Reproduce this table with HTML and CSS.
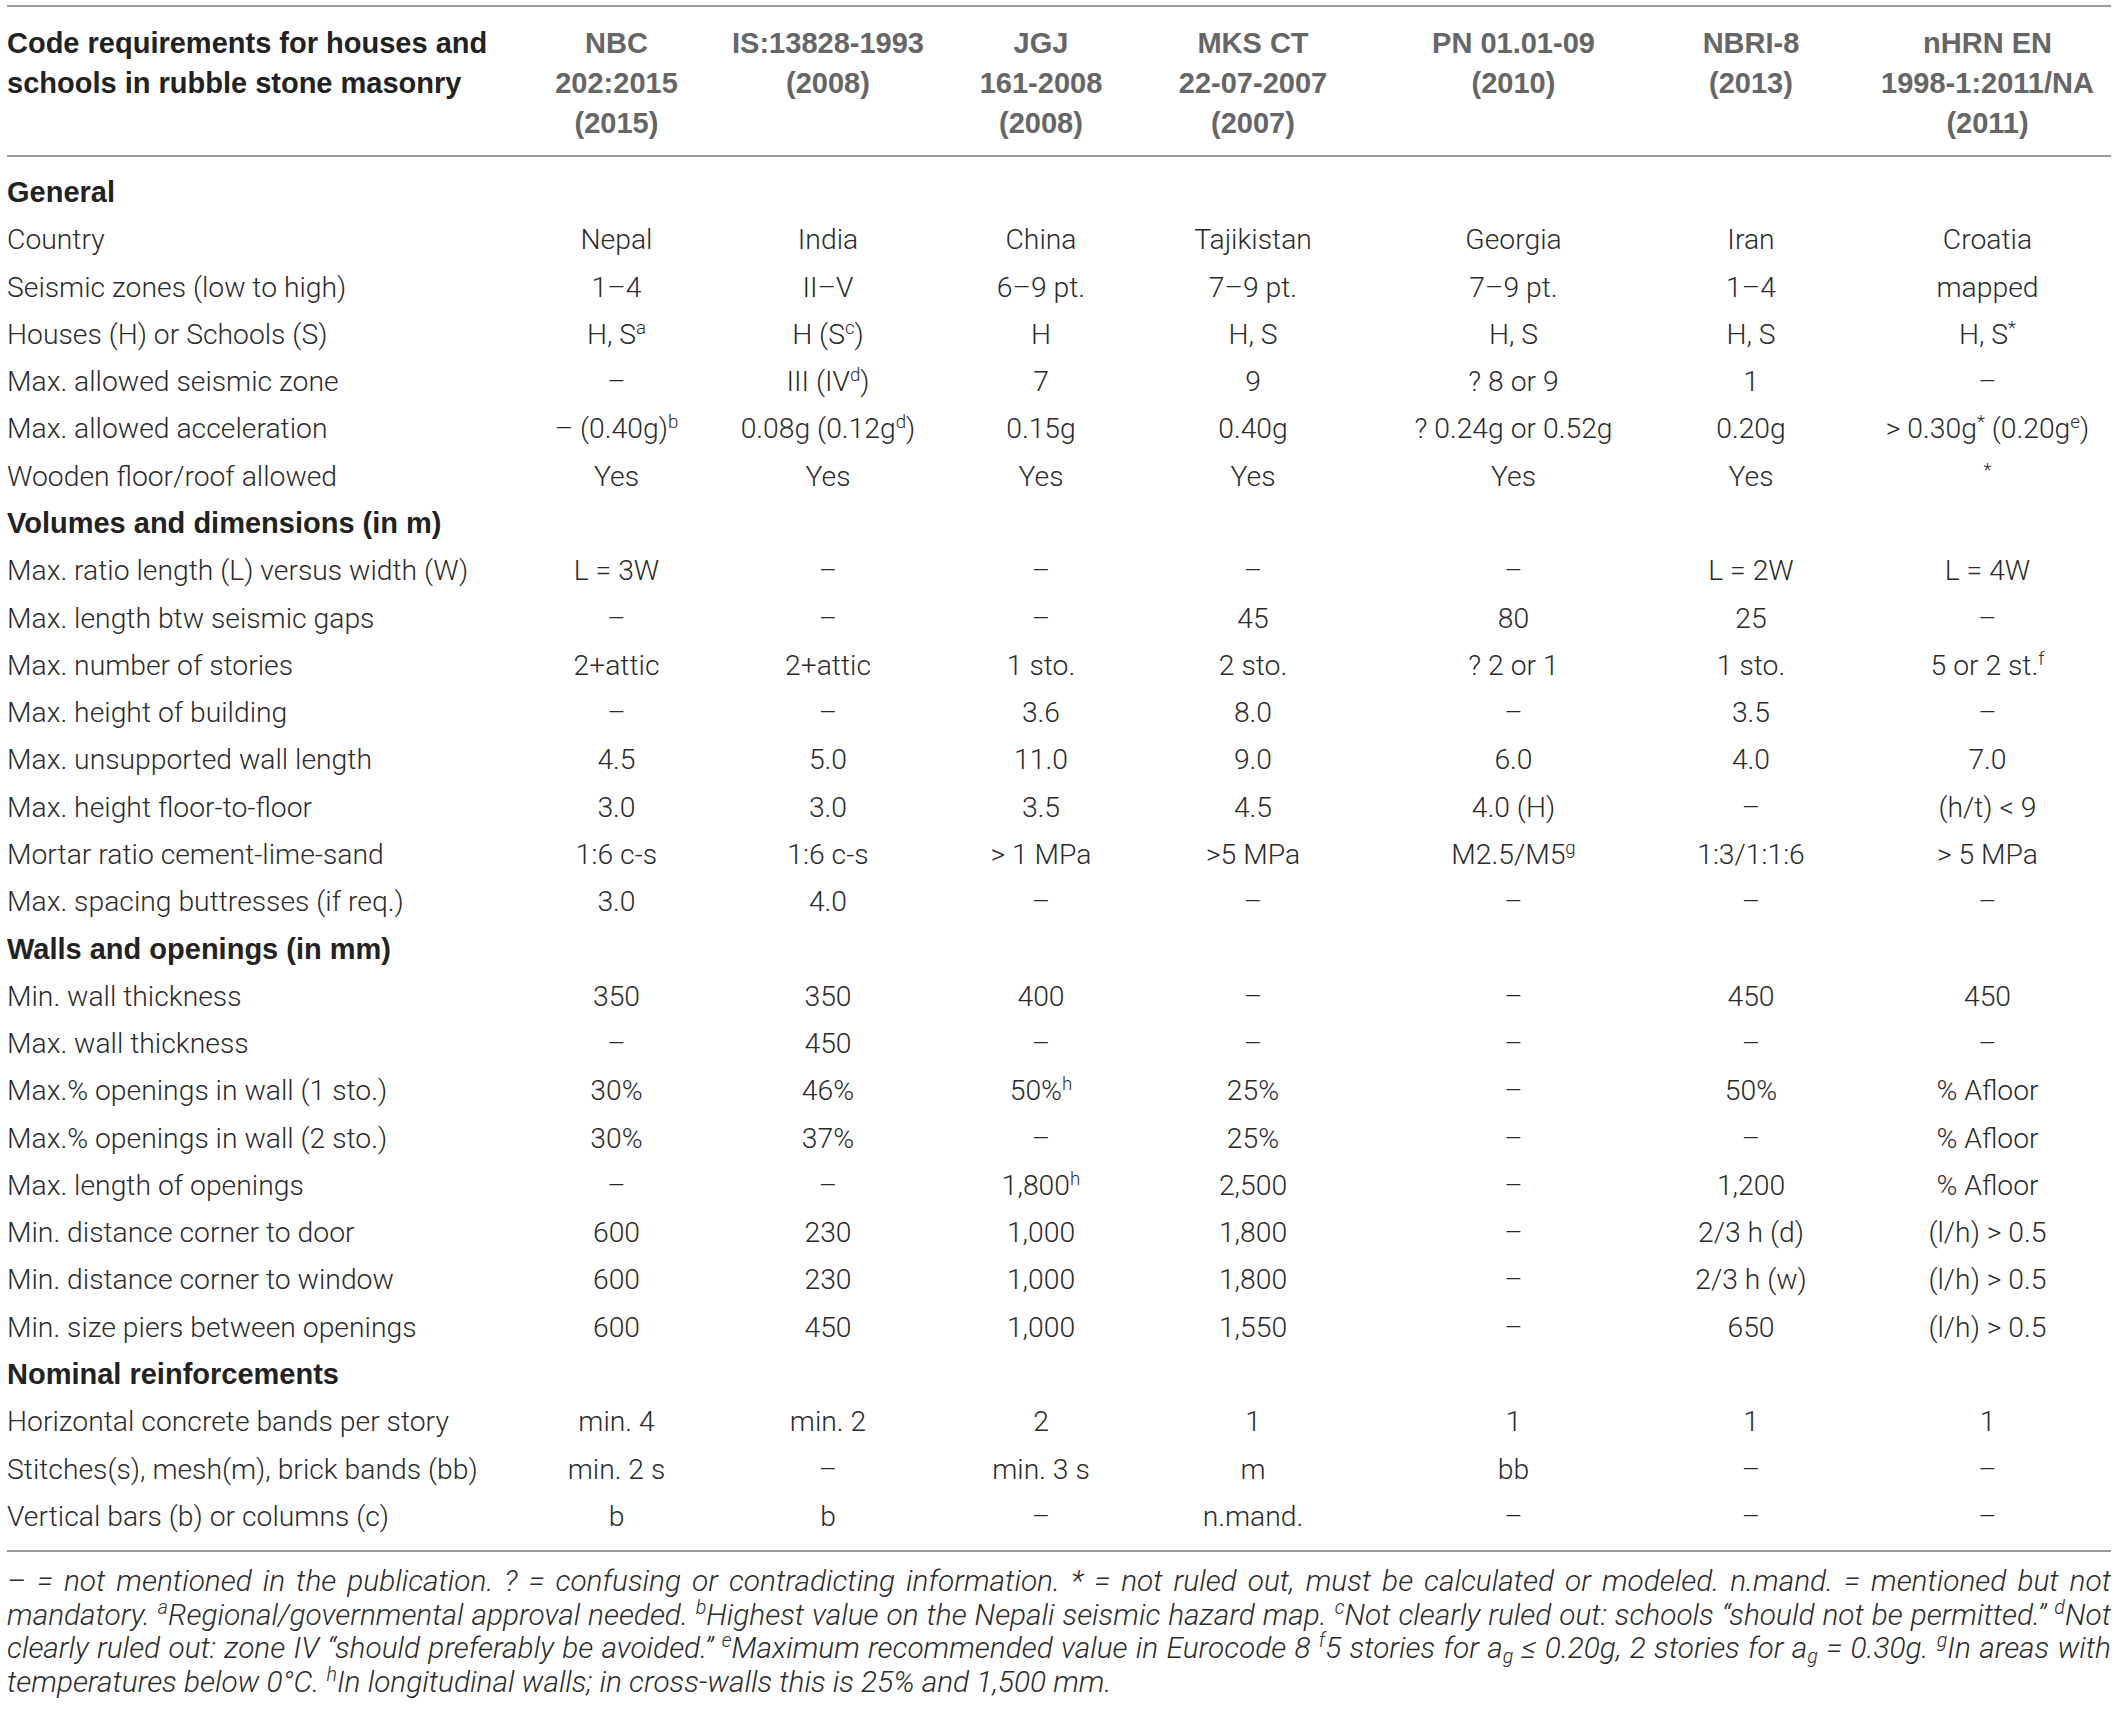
FILE: index.html
```html
<!DOCTYPE html>
<html lang="en">
<head>
<meta charset="utf-8">
<title>Code requirements for houses and schools in rubble stone masonry</title>
<link rel="stylesheet" href="styles.css">
</head>
<body>
<div class="wrap">
<table class="codes">
  <colgroup>
    <col class="c0"><col class="c1"><col class="c2"><col class="c3"><col class="c4"><col class="c5"><col class="c6"><col class="c7">
  </colgroup>
  <thead>
    <tr>
      <th class="lead">Code requirements for houses and schools in rubble stone masonry</th>
      <th>NBC<br>202:2015<br>(2015)</th>
      <th>IS:13828-1993<br>(2008)</th>
      <th>JGJ<br>161-2008<br>(2008)</th>
      <th>MKS CT<br>22-07-2007<br>(2007)</th>
      <th>PN 01.01-09<br>(2010)</th>
      <th>NBRI-8<br>(2013)</th>
      <th class="last">nHRN EN<br>1998-1:2011/NA<br>(2011)</th>
    </tr>
  </thead>
  <tbody>
    <tr class="sec first"><td colspan="8">General</td></tr>
    <tr><td>Country</td><td>Nepal</td><td>India</td><td>China</td><td>Tajikistan</td><td>Georgia</td><td>Iran</td><td class="last">Croatia</td></tr>
    <tr><td>Seismic zones (low to high)</td><td>1–4</td><td>II–V</td><td>6–9 pt.</td><td>7–9 pt.</td><td>7–9 pt.</td><td>1–4</td><td class="last">mapped</td></tr>
    <tr><td>Houses (H) or Schools (S)</td><td>H, S<sup>a</sup></td><td>H (S<sup>c</sup>)</td><td>H</td><td>H, S</td><td>H, S</td><td>H, S</td><td class="last">H, S<sup>*</sup></td></tr>
    <tr><td>Max. allowed seismic zone</td><td>–</td><td>III (IV<sup>d</sup>)</td><td>7</td><td>9</td><td>? 8 or 9</td><td>1</td><td class="last">–</td></tr>
    <tr><td>Max. allowed acceleration</td><td>– (0.40g)<sup>b</sup></td><td>0.08g (0.12g<sup>d</sup>)</td><td>0.15g</td><td>0.40g</td><td>? 0.24g or 0.52g</td><td>0.20g</td><td class="last">&gt; 0.30g<sup>*</sup> (0.20g<sup>e</sup>)</td></tr>
    <tr><td>Wooden floor/roof allowed</td><td>Yes</td><td>Yes</td><td>Yes</td><td>Yes</td><td>Yes</td><td>Yes</td><td class="last"><sup>*</sup></td></tr>
    <tr class="sec"><td colspan="8">Volumes and dimensions (in m)</td></tr>
    <tr><td>Max. ratio length (L) versus width (W)</td><td>L = 3W</td><td>–</td><td>–</td><td>–</td><td>–</td><td>L = 2W</td><td class="last">L = 4W</td></tr>
    <tr><td>Max. length btw seismic gaps</td><td>–</td><td>–</td><td>–</td><td>45</td><td>80</td><td>25</td><td class="last">–</td></tr>
    <tr><td>Max. number of stories</td><td>2+attic</td><td>2+attic</td><td>1 sto.</td><td>2 sto.</td><td>? 2 or 1</td><td>1 sto.</td><td class="last">5 or 2 st.<sup>f</sup></td></tr>
    <tr><td>Max. height of building</td><td>–</td><td>–</td><td>3.6</td><td>8.0</td><td>–</td><td>3.5</td><td class="last">–</td></tr>
    <tr><td>Max. unsupported wall length</td><td>4.5</td><td>5.0</td><td>11.0</td><td>9.0</td><td>6.0</td><td>4.0</td><td class="last">7.0</td></tr>
    <tr><td>Max. height floor-to-floor</td><td>3.0</td><td>3.0</td><td>3.5</td><td>4.5</td><td>4.0 (H)</td><td>–</td><td class="last">(h/t) &lt; 9</td></tr>
    <tr><td>Mortar ratio cement-lime-sand</td><td>1:6 c-s</td><td>1:6 c-s</td><td>&gt; 1 MPa</td><td>&gt;5 MPa</td><td>M2.5/M5<sup>g</sup></td><td>1:3/1:1:6</td><td class="last">&gt; 5 MPa</td></tr>
    <tr><td>Max. spacing buttresses (if req.)</td><td>3.0</td><td>4.0</td><td>–</td><td>–</td><td>–</td><td>–</td><td class="last">–</td></tr>
    <tr class="sec"><td colspan="8">Walls and openings (in mm)</td></tr>
    <tr><td>Min. wall thickness</td><td>350</td><td>350</td><td>400</td><td>–</td><td>–</td><td>450</td><td class="last">450</td></tr>
    <tr><td>Max. wall thickness</td><td>–</td><td>450</td><td>–</td><td>–</td><td>–</td><td>–</td><td class="last">–</td></tr>
    <tr><td>Max.% openings in wall (1 sto.)</td><td>30%</td><td>46%</td><td>50%<sup>h</sup></td><td>25%</td><td>–</td><td>50%</td><td class="last">% Afloor</td></tr>
    <tr><td>Max.% openings in wall (2 sto.)</td><td>30%</td><td>37%</td><td>–</td><td>25%</td><td>–</td><td>–</td><td class="last">% Afloor</td></tr>
    <tr><td>Max. length of openings</td><td>–</td><td>–</td><td>1,800<sup>h</sup></td><td>2,500</td><td>–</td><td>1,200</td><td class="last">% Afloor</td></tr>
    <tr><td>Min. distance corner to door</td><td>600</td><td>230</td><td>1,000</td><td>1,800</td><td>–</td><td>2/3 h (d)</td><td class="last">(l/h) &gt; 0.5</td></tr>
    <tr><td>Min. distance corner to window</td><td>600</td><td>230</td><td>1,000</td><td>1,800</td><td>–</td><td>2/3 h (w)</td><td class="last">(l/h) &gt; 0.5</td></tr>
    <tr><td>Min. size piers between openings</td><td>600</td><td>450</td><td>1,000</td><td>1,550</td><td>–</td><td>650</td><td class="last">(l/h) &gt; 0.5</td></tr>
    <tr class="sec"><td colspan="8">Nominal reinforcements</td></tr>
    <tr><td>Horizontal concrete bands per story</td><td>min. 4</td><td>min. 2</td><td>2</td><td>1</td><td>1</td><td>1</td><td class="last">1</td></tr>
    <tr><td>Stitches(s), mesh(m), brick bands (bb)</td><td>min. 2 s</td><td>–</td><td>min. 3 s</td><td>m</td><td>bb</td><td>–</td><td class="last">–</td></tr>
    <tr class="end"><td>Vertical bars (b) or columns (c)</td><td>b</td><td>b</td><td>–</td><td>n.mand.</td><td>–</td><td>–</td><td class="last">–</td></tr>
  </tbody>
</table>
<p class="notes"><span class="ln">– = not mentioned in the publication. ? = confusing or contradicting information. * = not ruled out, must be calculated or modeled. n.mand. = mentioned but not</span> <span class="ln">mandatory. <sup>a</sup>Regional/governmental approval needed. <sup>b</sup>Highest value on the Nepali seismic hazard map. <sup>c</sup>Not clearly ruled out: schools “should not be permitted.” <sup>d</sup>Not</span> <span class="ln">clearly ruled out: zone IV “should preferably be avoided.” <sup>e</sup>Maximum recommended value in Eurocode 8 <sup>f</sup>5 stories for a<sub>g</sub> ≤ 0.20g, 2 stories for a<sub>g</sub> = 0.30g. <sup>g</sup>In areas with</span> <span class="ln lastln">temperatures below 0°C. <sup>h</sup>In longitudinal walls; in cross-walls this is 25% and 1,500 mm.</span></p>
</div>
</body>
</html>
```

FILE: styles.css
```css
html, body {
  margin: 0;
  padding: 0;
  background: #ffffff;
}

body {
  font-family: Roboto, "Liberation Sans", sans-serif;
  font-weight: 300;
  font-size: 28.3px;
  color: #2b2b2b;
}

.wrap {
  width: 2104px;
  padding: 5px 7px 0 7px;
}

.codes {
  width: 2104px;
  table-layout: fixed;
  border-collapse: collapse;
  border-spacing: 0;
}

.c0 { width: 503px; }
.c1 { width: 213px; }
.c2 { width: 210px; }
.c3 { width: 216px; }
.c4 { width: 208px; }
.c5 { width: 313px; }
.c6 { width: 162px; }
.c7 { width: 279px; }

.codes thead tr {
  border-top: 2px solid #9b9b9b;
  border-bottom: 2px solid #9b9b9b;
}

.codes th {
  font-family: "Liberation Sans", Arial, sans-serif;
  font-weight: 700;
  font-size: 29px;
  line-height: 40px;
  color: #666666;
  text-align: center;
  vertical-align: top;
  padding: 16px 0 12px 0;
  white-space: nowrap;
}

.codes th.lead {
  text-align: left;
  color: #222222;
  white-space: normal;
  padding-right: 10px;
}

.codes td {
  padding: 0;
  height: 47.28px;
  line-height: 47.28px;
  text-align: center;
  vertical-align: middle;
  white-space: nowrap;
}

.codes td:first-child {
  text-align: left;
}

.codes .last {
  padding-left: 32px;
}

.codes tr.sec td {
  font-family: "Liberation Sans", Arial, sans-serif;
  font-weight: 700;
  font-size: 29px;
  color: #222222;
  text-align: left;
}

.codes tr.first td {
  padding-top: 12px;
  height: 47.28px;
}

.codes tr.end td {
  padding-bottom: 10px;
}

.codes tbody tr.end {
  border-bottom: 2px solid #9b9b9b;
}

sup {
  font-size: 0.66em;
  line-height: 0;
  vertical-align: 0.55em;
}

sub {
  font-size: 0.66em;
  line-height: 0;
  vertical-align: -0.25em;
}

.notes {
  margin: 0;
  padding-top: 12px;
  font-style: italic;
  font-size: 29.8px;
  line-height: 33.5px;
  color: #2b2b2b;
}

.notes .ln {
  display: block;
  text-align: justify;
  text-align-last: justify;
  white-space: nowrap;
}

.notes .ln.lastln {
  text-align: left;
  text-align-last: left;
}
```
